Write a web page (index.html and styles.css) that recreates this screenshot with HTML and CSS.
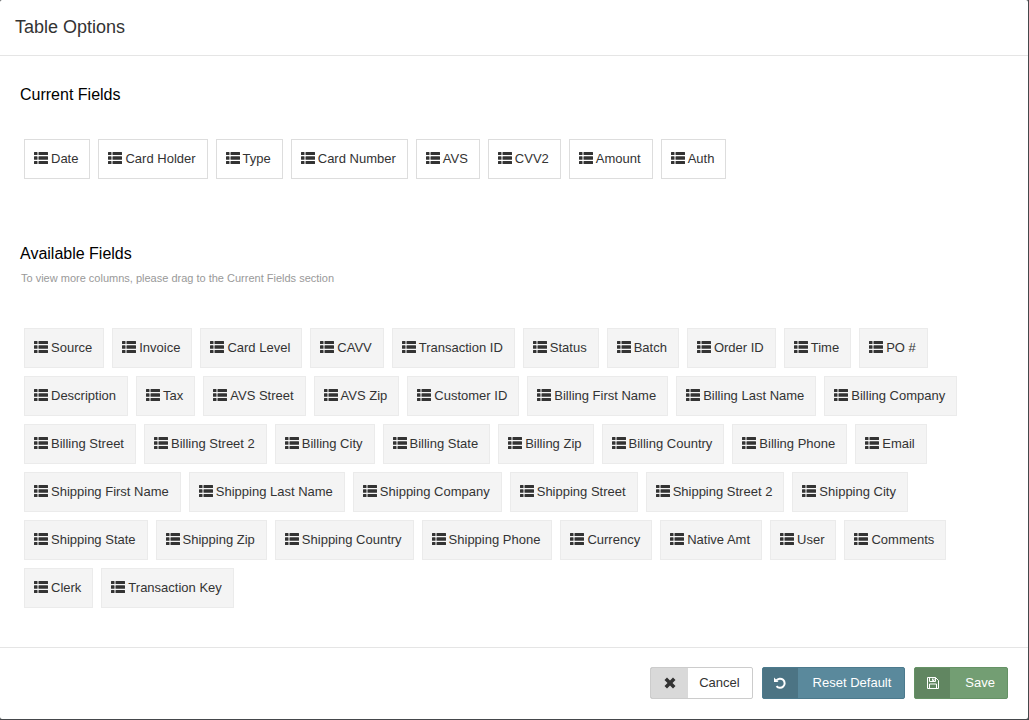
FILE: index.html
```
<!DOCTYPE html>
<html lang="en">
<head>
    <meta charset="UTF-8">
    <meta name="viewport" content="width=device-width, initial-scale=1.0">
    <title>Table Options</title>
    <link rel="stylesheet" href="styles.css">
</head>
<body>

    <svg class="icon-defs" xmlns="http://www.w3.org/2000/svg" aria-hidden="true">
        <symbol id="icon-list" viewBox="0 0 14 12">
            <path d="M.5 0h2.500q.5 0 .5.5v2q0 .5-.5.5H.5Q0 3 0 2.500v-2Q0 0 .5 0zM.5 4.300h2.500q.5 0 .5.5v2.400q0 .5-.5.5H.5Q0 7.700 0 7.200V4.800q0-.5.5-.5zM.5 9h2.500q.5 0 .5.5v2q0 .5-.5.5H.5Q0 12 0 11.500v-2Q0 9 .5 9zM5 0h8.500q.5 0 .5.5v2q0 .5-.5.5H5q-.5 0-.5-.5v-2Q4.500 0 5 0zM5 4.300h8.500q.5 0 .5.5v2.400q0 .5-.5.5H5q-.5 0-.5-.5V4.800q0-.5.5-.5zM5 9h8.500q.5 0 .5.5v2q0 .5-.5.5H5q-.5 0-.5-.5v-2Q4.500 9 5 9z"/>
        </symbol>
    </svg>

    <main class="modal">
        <header class="modal-header">
            <h1>Table Options</h1>
        </header>

        <div class="modal-body">
            <section>
                <h2>Current Fields</h2>
                <ul class="field-list current" id="current-fields"></ul>
            </section>

            <section>
                <h2>Available Fields</h2>
                <p class="hint">To view more columns, please drag to the Current Fields section</p>
                <ul class="field-list available" id="available-fields"></ul>
            </section>
        </div>

        <footer class="modal-footer">
            <button type="button" class="btn btn-cancel">
                <span class="btn-icon">
                    <svg width="12" height="12" viewBox="0 0 12 12"><path d="M3 .5 6 3.500 9 .5 11.500 3 8.500 6l3 3L9 11.500l-3-3-3 3L.5 9l3-3-3-3z"/></svg>
                </span>
                <span class="btn-text">Cancel</span>
            </button>
            <button type="button" class="btn btn-reset">
                <span class="btn-icon">
                    <svg width="12" height="12" viewBox="0 0 12 12"><path class="stroke" d="M2.400 3.400A4.600 4.600 0 1 1 2.500 9.200"/><path d="M0 .5v4.500h4.500z"/></svg>
                </span>
                <span class="btn-text">Reset Default</span>
            </button>
            <button type="button" class="btn btn-save">
                <span class="btn-icon">
                    <svg width="12" height="12" viewBox="0 0 12 12"><path class="line" d="M.5.5h8l3 3v8H.5zM2.500.5v4h6v-4M5.500 1.500v2h1.500v-2M2.500 11.500V7h7v4.500"/></svg>
                </span>
                <span class="btn-text">Save</span>
            </button>
        </footer>
    </main>

    <script src="script.js"></script>
</body>
</html>
```
FILE: styles.css
```
* {
    box-sizing: border-box;
}

body {
    margin: 0;
    padding: 0 1px 1px 0;
    background-color: #45484b;
    font-family: "Liberation Sans", Arial, sans-serif;
    font-size: 13px;
    color: #333333;
}

.icon-defs {
    display: none;
}

.modal {
    display: flex;
    flex-direction: column;
    min-height: calc(100vh - 1px);
    background-color: #ffffff;
    border-radius: 2px;
}

.modal-header {
    padding: 15px;
    border-bottom: 1px solid #e5e5e5;
}

.modal-header h1 {
    margin: 0;
    font-size: 18px;
    font-weight: normal;
    line-height: 25px;
}

.modal-body {
    flex: 1;
    padding: 29px 20px 35px;
}

.modal-body section + section {
    margin-top: 61px;
}

.modal-body h2 {
    margin: 0;
    font-size: 16px;
    font-weight: normal;
    line-height: 20px;
    color: #000000;
}

.hint {
    margin: 6px 1px 0;
    font-size: 11px;
    line-height: 16px;
    color: #999999;
}

/* Draggable fields */
.field-list {
    display: flex;
    flex-wrap: wrap;
    gap: 8px;
    margin: 0;
    padding: 4px;
    list-style: none;
}

.field-list.current {
    margin-top: 30px;
}

.field-list.available {
    margin-top: 38px;
}

.field {
    display: flex;
    align-items: center;
    gap: 3px;
    height: 40px;
    padding: 0 11px 0 9px;
    border: 1px solid #dddddd;
    background-color: #ffffff;
    line-height: 20px;
    white-space: nowrap;
    cursor: move;
}

.available .field {
    border-color: #ebebeb;
    background-color: #f4f4f4;
}

.field svg {
    width: 14px;
    height: 12px;
    margin-bottom: 2px;
    fill: #333333;
}

/* Footer buttons */
.modal-footer {
    display: flex;
    justify-content: flex-end;
    gap: 9px;
    padding: 19px 20px 20px;
    border-top: 1px solid #e5e5e5;
}

.btn {
    display: flex;
    height: 32px;
    padding: 0;
    border: 1px solid #cccccc;
    border-radius: 2px;
    background-color: #ffffff;
    color: #333333;
    font-family: inherit;
    font-size: 13px;
    line-height: 30px;
    cursor: pointer;
}

.btn-icon {
    display: flex;
    align-items: center;
    justify-content: center;
    width: 35px;
    height: 30px;
    background-color: rgba(0, 0, 0, 0.15);
}

.btn-icon svg {
    fill: currentColor;
}

.btn-icon .stroke {
    fill: none;
    stroke: currentColor;
    stroke-width: 2;
}

.btn-icon .line {
    fill: none;
    stroke: currentColor;
}

.btn-text {
    padding: 0 12px 0 15px;
}

.btn-cancel .btn-icon {
    width: 37px;
}

.btn-cancel .btn-text {
    padding-left: 11px;
}

.btn-reset .btn-text {
    padding-right: 13px;
}

.btn-reset,
.btn-save {
    color: #ffffff;
}

.btn-reset {
    border-color: #4c7a8d;
    background-color: #5a899c;
}

.btn-save {
    border-color: #659265;
    background-color: #739e73;
}
```
FILE: script.js
```
const currentFields = ['Date', 'Card Holder', 'Type', 'Card Number', 'AVS', 'CVV2', 'Amount', 'Auth'];

const availableFields = [
    'Source', 'Invoice', 'Card Level', 'CAVV', 'Transaction ID', 'Status', 'Batch', 'Order ID', 'Time', 'PO #',
    'Description', 'Tax', 'AVS Street', 'AVS Zip', 'Customer ID',
    'Billing First Name', 'Billing Last Name', 'Billing Company', 'Billing Street', 'Billing Street 2',
    'Billing City', 'Billing State', 'Billing Zip', 'Billing Country', 'Billing Phone', 'Email',
    'Shipping First Name', 'Shipping Last Name', 'Shipping Company', 'Shipping Street', 'Shipping Street 2',
    'Shipping City', 'Shipping State', 'Shipping Zip', 'Shipping Country', 'Shipping Phone',
    'Currency', 'Native Amt', 'User', 'Comments', 'Clerk', 'Transaction Key'
];

function renderFields(listId, fields) {
    const list = document.getElementById(listId);
    fields.forEach(name => {
        const item = document.createElement('li');
        item.className = 'field';
        item.draggable = true;
        item.innerHTML = `<svg aria-hidden="true"><use href="#icon-list"></use></svg><span>${name}</span>`;
        list.appendChild(item);
    });
}

renderFields('current-fields', currentFields);
renderFields('available-fields', availableFields);

// --- Drag and drop between the two lists ---
let dragged = null;

document.querySelectorAll('.field-list').forEach(list => {
    list.addEventListener('dragstart', event => {
        dragged = event.target.closest('.field');
    });
    list.addEventListener('dragover', event => event.preventDefault());
    list.addEventListener('drop', event => {
        event.preventDefault();
        if (dragged) {
            list.insertBefore(dragged, event.target.closest('.field'));
            dragged = null;
        }
    });
});
```
